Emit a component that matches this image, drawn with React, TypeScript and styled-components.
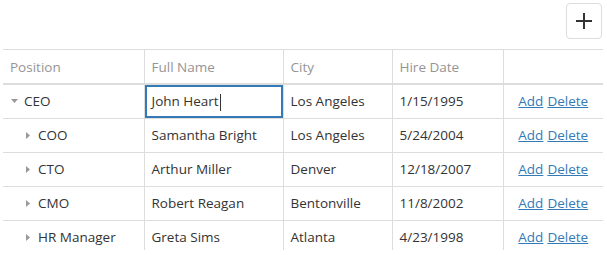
import styled, { createGlobalStyle } from 'styled-components';

const GlobalStyle = createGlobalStyle`
  html, body {
    margin: 0;
    padding: 0;
    background: #fff;
    font-family: 'Open Sans', 'Noto Sans', sans-serif;
  }
`;

const Page = styled.div`
  width: 600px;
  height: 247px;
  margin: 3px 3px 0 3px;
  display: flex;
  flex-direction: column;
  overflow: hidden;
`;

const Toolbar = styled.div`
  display: flex;
  justify-content: flex-end;
  height: 46px;
  flex-shrink: 0;
`;

const AddButton = styled.button`
  width: 36px;
  height: 36px;
  box-sizing: border-box;
  border: 1px solid #ddd;
  border-radius: 4px;
  background: #fff;
  display: flex;
  align-items: center;
  justify-content: center;
  padding: 0;
  margin-right: 1px;
  cursor: pointer;
`;

const Table = styled.table`
  width: 600px;
  border-collapse: collapse;
  table-layout: fixed;
  font-size: 13.5px;
  color: #333;
`;

const HeadCell = styled.th`
  height: 33px;
  padding: 0 7px;
  text-align: left;
  font-weight: 400;
  color: #959595;
  border-top: 1px solid #ddd;
  border-bottom: 2px solid #ddd;
  border-left: 1px solid #ddd;
  &:first-child {
    border-left: none;
  }
`;

const Cell = styled.td<{ $focused?: boolean; $center?: boolean }>`
  height: 34px;
  padding: 0 7px;
  box-sizing: border-box;
  white-space: nowrap;
  text-align: ${(p) => (p.$center ? 'center' : 'left')};
  border-bottom: 1px solid #ddd;
  border-left: 1px solid #ddd;
  box-shadow: ${(p) => (p.$focused ? 'inset 0 0 0 2px #337ab7' : 'none')};
  &:first-child {
    border-left: none;
  }
`;

const TreeCell = styled.div<{ $level: number }>`
  display: flex;
  align-items: center;
  padding-left: ${(p) => p.$level * 14}px;
`;

const Expander = styled.span`
  width: 8px;
  display: inline-flex;
  justify-content: center;
  margin-right: 6px;
`;

const Caret = styled.span`
  display: inline-block;
  width: 1px;
  height: 17px;
  background: #333;
  vertical-align: middle;
  margin-left: 1px;
`;

const Link = styled.a`
  color: #337ab7;
  text-decoration: underline;
  cursor: pointer;
  & + & {
    margin-left: 4px;
  }
`;

interface IRow {
  position: string;
  name: string;
  city: string;
  hired: string;
  level: number;
  expanded: boolean;
}

const rows: IRow[] = [
  { position: 'CEO', name: 'John Heart', city: 'Los Angeles', hired: '1/15/1995', level: 0, expanded: true },
  { position: 'COO', name: 'Samantha Bright', city: 'Los Angeles', hired: '5/24/2004', level: 1, expanded: false },
  { position: 'CTO', name: 'Arthur Miller', city: 'Denver', hired: '12/18/2007', level: 1, expanded: false },
  { position: 'CMO', name: 'Robert Reagan', city: 'Bentonville', hired: '11/8/2002', level: 1, expanded: false },
  { position: 'HR Manager', name: 'Greta Sims', city: 'Atlanta', hired: '4/23/1998', level: 1, expanded: false },
];

function Arrow({ open }: { open: boolean }) {
  return open ? (
    <svg width="7" height="4" viewBox="0 0 7 4">
      <path d="M0 0h7L3.5 4z" fill="#999" />
    </svg>
  ) : (
    <svg width="4" height="7" viewBox="0 0 4 7">
      <path d="M0 0v7l4-3.5z" fill="#999" />
    </svg>
  );
}

export default function App() {
  return (
    <>
      <GlobalStyle />
      <Page>
        <Toolbar>
          <AddButton>
            <svg width="18" height="18" viewBox="0 0 18 18">
              <path d="M9 1v16M1 9h16" stroke="#333" strokeWidth="2" />
            </svg>
          </AddButton>
        </Toolbar>
        <Table>
          <colgroup>
            <col style={{ width: 141 }} />
            <col style={{ width: 139 }} />
            <col style={{ width: 109 }} />
            <col style={{ width: 111 }} />
            <col style={{ width: 100 }} />
          </colgroup>
          <thead>
            <tr>
              <HeadCell>Position</HeadCell>
              <HeadCell>Full Name</HeadCell>
              <HeadCell>City</HeadCell>
              <HeadCell>Hire Date</HeadCell>
              <HeadCell />
            </tr>
          </thead>
          <tbody>
            {rows.map((r, i) => (
              <tr key={r.position}>
                <Cell>
                  <TreeCell $level={r.level}>
                    <Expander>
                      <Arrow open={r.expanded} />
                    </Expander>
                    {r.position}
                  </TreeCell>
                </Cell>
                <Cell $focused={i === 0}>
                  {r.name}
                  {i === 0 && <Caret />}
                </Cell>
                <Cell>{r.city}</Cell>
                <Cell>{r.hired}</Cell>
                <Cell $center>
                  <Link>Add</Link>
                  <Link>Delete</Link>
                </Cell>
              </tr>
            ))}
          </tbody>
        </Table>
      </Page>
    </>
  );
}
